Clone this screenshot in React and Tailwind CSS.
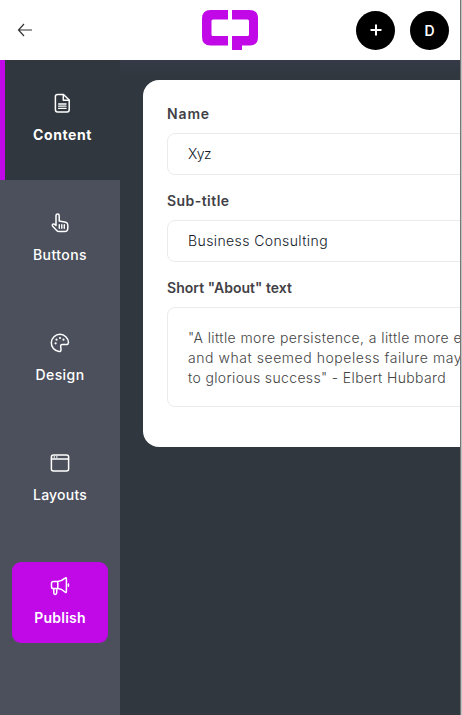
import React from 'react';

const stroke = {
  fill: 'none',
  stroke: 'currentColor',
  strokeWidth: 1.5,
  strokeLinecap: 'round',
  strokeLinejoin: 'round',
};

function DocumentIcon() {
  return (
    <svg className="-ml-px" width="20" height="20" viewBox="0 0 20 20" {...stroke}>
      <path d="M11.500 1.500H5.500Q3.400 1.500 3.400 3.600v13.200Q3.400 18.900 5.500 18.900h9.600q2.100 0 2.100-2.100V7z" />
      <path d="M11.300 1.700v5.500h5.700" />
      <path d="M6.600 11h7.400M6.600 13.200h7.400M6.600 15.400h7.400" strokeWidth="1.300" />
    </svg>
  );
}

function PointerIcon() {
  return (
    <svg width="20" height="20" viewBox="0 0 20 20" {...stroke}>
      <path d="M6 12.5V2.8q0-1.7 1.6-1.7t1.6 1.7V8l6.6 1.3q2 .5 2 2.6v3.4q0 3.3-3.3 3.3H9.2q-1.5 0-2.5-1.2l-4-4.2q-.9-1.2.2-2 1-.6 2 .2z" />
      <path d="M9.3 11.7v3.6M11.8 11.7v3.6M14.3 11.7v3.6" strokeWidth="1.4" />
    </svg>
  );
}

function PaletteIcon() {
  return (
    <svg width="20" height="20" viewBox="0 0 20 20" {...stroke}>
      <path d="M10.8 14q-.8-2.4 1.7-2.5h4.2q1.6 0 1.8-2A8.6 8.6 0 1 0 9 18.500q2 .2 2-1.800z" />
      <g fill="currentColor" stroke="none">
        <circle cx="5.6" cy="10.3" r="1.1" />
        <circle cx="6.5" cy="6.7" r="1.1" />
        <circle cx="10" cy="5" r="1.1" />
        <circle cx="13.5" cy="6.7" r="1.1" />
      </g>
    </svg>
  );
}

function WindowIcon() {
  return (
    <svg width="20" height="20" viewBox="0 0 20 20" {...stroke}>
      <rect x="1.4" y="2.1" width="17.2" height="15.8" rx="2" />
      <path d="M1.5 6.1h17M4.2 4.1h.2M6.7 4.1h.2" />
    </svg>
  );
}

function MegaphoneIcon() {
  return (
    <svg width="20" height="20" viewBox="0 0 20 20" {...stroke}>
      <path d="M7.8 5.6H3.2Q1.5 5.6 1.5 7.3v3.500q0 1.800 1.700 1.800h4.600zM7.800 5.600Q11.500 5.200 14.700 2.400q1.700-1.600 1.700.2v13q0 1.800-1.700.2-3.200-3-6.900-3.200" />
      <path d="M3.8 12.8v4q0 1.6 1.4 1.6t1.500-1.600v-4M18.400 8.100v2.200" />
    </svg>
  );
}

function Logo() {
  return (
    <svg width="56" height="40" viewBox="0 0 56 40" fill="#c109e8">
      <path d="M8.500 0H26v9.500H11q-1.500 0-1.500 1.500v13.500q0 1.500 1.500 1.500h15v9.500H8.500Q0 35.500 0 27V8.500Q0 0 8.500 0z" />
      <path d="M30 0h17.500Q56 0 56 8.500V27q0 8.500-8.500 8.500H40V40H30V26h15.500q1.500 0 1.500-1.500V11q0-1.500-1.500-1.500H30z" />
    </svg>
  );
}

function NavItem({ icon, label, width, active }) {
  return (
    <button
      className={`relative flex h-[120px] w-full flex-col items-center pt-[33px] text-white ${
        active ? 'border-l-[5px] border-[#c109e8] bg-[#30373e] font-bold' : 'font-medium'
      }`}
    >
      {icon}
      <Label width={width} className="mt-[11px] text-center leading-[22px]">{label}</Label>
    </button>
  );
}

// Fixed-width label whose glyphs are spread evenly across the given width.
function Label({ children, width, className = '' }) {
  const ref = React.useRef(null);
  const [spacing, setSpacing] = React.useState(0);
  React.useLayoutEffect(() => {
    const el = ref.current;
    el.style.letterSpacing = '0px';
    const natural = el.getBoundingClientRect().width;
    const next = (width - natural) / children.length;
    el.style.letterSpacing = `${next}px`;
    setSpacing(next);
  }, [width, children]);
  return (
    <span className={`block text-[14px] ${className}`}>
      <span ref={ref} className="whitespace-nowrap" style={{ letterSpacing: spacing }}>
        {children}
      </span>
    </span>
  );
}

function FieldLabel({ children, width }) {
  return (
    <Label width={width} className="leading-[22px] font-semibold text-[#423f46]">{children}</Label>
  );
}

function Input({ children, width }) {
  return (
    <div className="mt-2 mb-[15px] flex h-[42px] items-center rounded-lg border border-[#ebebeb] pl-5 text-[#111827]">
      <Label width={width} className="leading-[22px] font-light">{children}</Label>
    </div>
  );
}

export default function App() {
  return (
    <div className="flex h-[715px] w-[462px] overflow-hidden bg-white font-['Inter','Open_Sans',sans-serif]">
      <div className="flex w-[460px] shrink-0 flex-col overflow-hidden bg-[#30373e]">
        <header className="flex h-[60px] shrink-0 items-center bg-white pr-[11px] pl-[17px]">
          <svg width="16" height="14" viewBox="0 0 16 14" fill="none" stroke="#333" strokeWidth="1.200">
            <path d="M15 7H1.500M7 1L1.500 7l5.500 6" />
          </svg>
          <div className="ml-[169px]"><Logo /></div>
          <button className="ml-auto flex size-[39px] items-center justify-center rounded-full bg-black text-white">
            <svg width="12" height="12" viewBox="0 0 12 12" fill="none" stroke="currentColor" strokeWidth="2">
              <path d="M6 .500v11M.500 6h11" />
            </svg>
          </button>
          <button className="ml-[15px] flex size-[39px] items-center justify-center rounded-full bg-black text-[14px] font-semibold text-white">
            D
          </button>
        </header>

        <div className="flex min-h-0 flex-1">
          <nav className="w-[120px] shrink-0 bg-[#4c505c]">
            <NavItem active icon={<DocumentIcon />} label="Content" width={59} />
            <NavItem icon={<PointerIcon />} label="Buttons" width={54} />
            <NavItem icon={<PaletteIcon />} label="Design" width={49} />
            <NavItem icon={<WindowIcon />} label="Layouts" width={54} />
            <button className="mx-3 mt-[22px] flex h-[81px] w-24 flex-col items-center rounded-[9px] bg-[#c109e8] pt-[14px] font-semibold text-white">
              <MegaphoneIcon />
              <Label width={51.5} className="mt-[11px] leading-[22px]">Publish</Label>
            </button>
          </nav>

          <main className="min-w-0 flex-1 overflow-hidden bg-linear-to-b from-[#353a47] to-[#30373e] to-[18px] pt-5 pl-[23px]">
            <section className="h-[367px] w-[420px] rounded-[16px] bg-white px-6 pt-[23px]">
              <FieldLabel width={43}>Name</FieldLabel>
              <Input width={23}>Xyz</Input>
              <FieldLabel width={62.5}>Sub-title</FieldLabel>
              <Input width={140}>Business Consulting</Input>
              <FieldLabel width={125}>Short "About" text</FieldLabel>
              <div className="mt-2 h-[100px] rounded-lg border border-[#ebebeb] pt-5 pl-5 leading-5 font-light text-[#444]">
                <Label width={274}>"A little more persistence, a little more e</Label>
                <Label width={274}>and what seemed hopeless failure may</Label>
                <Label width={258}>to glorious success" - Elbert Hubbard</Label>
              </div>
            </section>
          </main>
        </div>
      </div>
      <div className="w-px bg-[#777]" />
      <div className="w-px bg-[#c0c0c0]" />
    </div>
  );
}
